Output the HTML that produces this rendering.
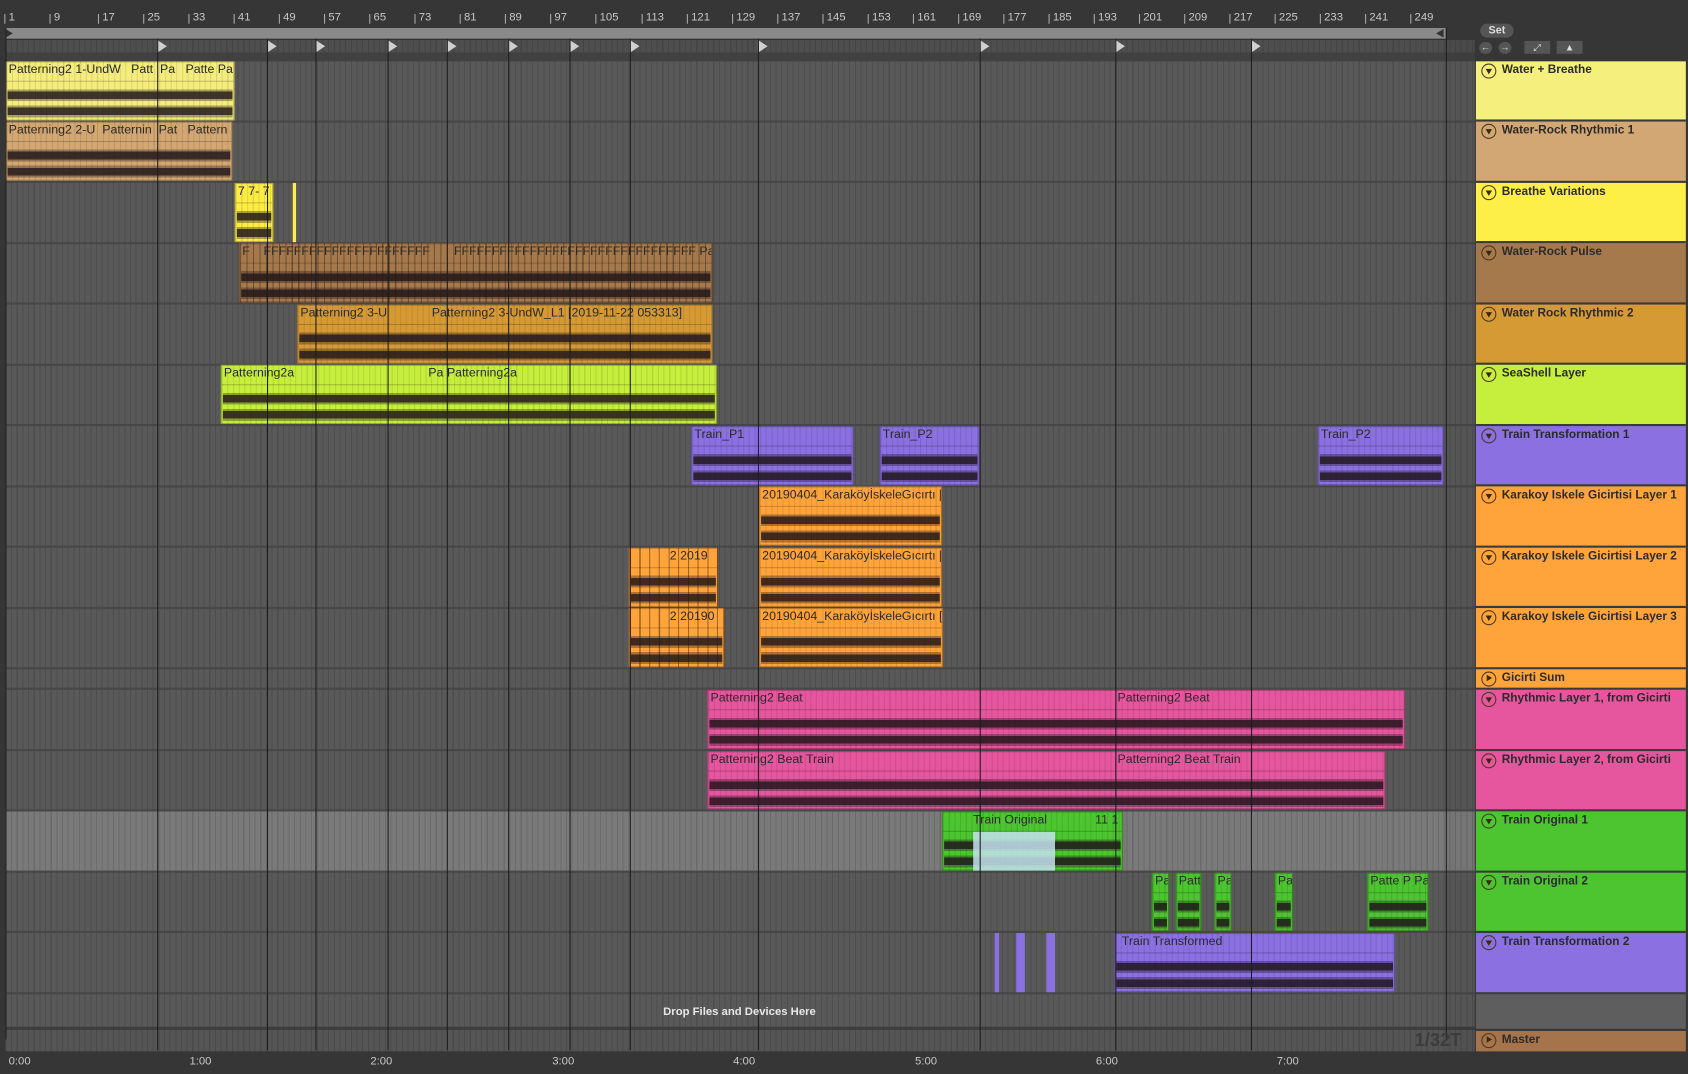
<!DOCTYPE html>
<html><head><meta charset="utf-8"><style>
*{margin:0;padding:0;box-sizing:border-box}
html,body{width:1688px;height:1074px;overflow:hidden;background:#353535}
#w{position:absolute;left:0;top:0;width:1568px;height:998px;transform-origin:0 0;transform:scale(1.07653,1.07615);font-family:"Liberation Sans",sans-serif;background:#363636}
.a{position:absolute}
.rl{position:absolute;top:10px;font-size:10.5px;color:#c8c8c8}
.rl:before{content:"";position:absolute;left:-4px;top:3px;width:1px;height:9px;background:#aaa}
.grid{position:absolute;left:5px;width:1365px;background-color:#595959;background-image:repeating-linear-gradient(90deg,rgba(0,0,0,.13) 0 1px,transparent 1px 5.26px)}
.sep{position:absolute;left:5px;width:1365px;height:2px;background:#474747}
.vl{position:absolute;top:36px;width:1px;height:940px;background:#1e1e1e}
.loc{position:absolute;top:37px;width:0;height:0;border-top:6px solid transparent;border-bottom:6px solid transparent;border-left:9px solid #cfcfcf}
.c{position:absolute;border:1px solid rgba(0,0,0,.25);overflow:hidden;background-image:repeating-linear-gradient(90deg,rgba(0,0,0,.1) 0 1px,transparent 1px 5.26px)}
.c span{position:absolute;left:2px;top:1px;font-size:11.5px;color:#2a2a2a;white-space:nowrap}
.c:before{content:"";position:absolute;left:0;right:0;top:17px;height:1px;background:rgba(0,0,0,.2)}
.c.w:after{content:"";position:absolute;left:1px;right:1px;top:22px;height:34px;background:linear-gradient(to bottom,transparent 0 3px,rgba(30,20,25,.35) 3px 5px,rgba(30,20,25,.85) 5px 12px,rgba(30,20,25,.35) 12px 14px,transparent 14px 18px,rgba(30,20,25,.35) 18px 20px,rgba(30,20,25,.85) 20px 27px,rgba(30,20,25,.35) 27px 29px,transparent 29px)}
.h{position:absolute;left:1371px;width:195px;border-bottom:2px solid #3a3a3a}
.h b{position:absolute;left:24px;top:2px;font-size:11px;color:#2b2b2b}
.h i{position:absolute;left:5px;top:2px;width:14px;height:14px;border:1.5px solid #4a3a20;border-radius:50%}
.h i:after{content:"";position:absolute;left:2.5px;top:3.5px;border-left:3.5px solid transparent;border-right:3.5px solid transparent;border-top:5px solid #3a2a10}
.h i.p:after{left:4px;top:2px;border-top:3.5px solid transparent;border-bottom:3.5px solid transparent;border-left:5px solid #3a2a10;border-right:0}
.tl{position:absolute;top:980px;font-size:10.5px;color:#c8c8c8}
</style></head><body><div id="w">
<div class="a" style="left:0;top:0;width:1370px;height:26px;background:#363636"></div>
<div class="rl" style="left:8px">1</div><div class="rl" style="left:50px">9</div><div class="rl" style="left:95px">17</div><div class="rl" style="left:137px">25</div><div class="rl" style="left:179px">33</div><div class="rl" style="left:221px">41</div><div class="rl" style="left:263px">49</div><div class="rl" style="left:305px">57</div><div class="rl" style="left:347px">65</div><div class="rl" style="left:389px">73</div><div class="rl" style="left:431px">81</div><div class="rl" style="left:473px">89</div><div class="rl" style="left:515px">97</div><div class="rl" style="left:557px">105</div><div class="rl" style="left:600px">113</div><div class="rl" style="left:642px">121</div><div class="rl" style="left:684px">129</div><div class="rl" style="left:726px">137</div><div class="rl" style="left:768px">145</div><div class="rl" style="left:810px">153</div><div class="rl" style="left:852px">161</div><div class="rl" style="left:894px">169</div><div class="rl" style="left:936px">177</div><div class="rl" style="left:978px">185</div><div class="rl" style="left:1020px">193</div><div class="rl" style="left:1062px">201</div><div class="rl" style="left:1104px">209</div><div class="rl" style="left:1146px">217</div><div class="rl" style="left:1188px">225</div><div class="rl" style="left:1230px">233</div><div class="rl" style="left:1272px">241</div><div class="rl" style="left:1314px">249</div>
<div class="a" style="left:5px;top:26px;width:1338px;height:11px;background:#8a8a8a;border-bottom:1px solid #222"></div>
<div class="a" style="left:5px;top:27px;border-top:4px solid transparent;border-bottom:4px solid transparent;border-left:7px solid #333"></div>
<div class="a" style="left:1334px;top:27px;border-top:4px solid transparent;border-bottom:4px solid transparent;border-right:7px solid #333"></div>
<div class="grid" style="top:37px;height:12px;background-color:#4e4e4e"></div>
<div class="a" style="left:5px;top:49px;width:1365px;height:8px;background:#414141"></div>
<div class="grid" style="top:57px;height:697px"></div>
<div class="grid" style="top:754px;height:56px;background-color:#7a7a7a"></div>
<div class="grid" style="top:810px;height:145px"></div>
<div class="grid" style="top:957px;height:20px;background-color:#555"></div>
<div class="sep" style="top:112px"></div><div class="sep" style="top:168px"></div><div class="sep" style="top:225px"></div><div class="sep" style="top:281px"></div><div class="sep" style="top:338px"></div><div class="sep" style="top:394px"></div><div class="sep" style="top:451px"></div><div class="sep" style="top:507px"></div><div class="sep" style="top:564px"></div><div class="sep" style="top:620px"></div><div class="sep" style="top:639px"></div><div class="sep" style="top:696px"></div><div class="sep" style="top:752px"></div><div class="sep" style="top:809px"></div><div class="sep" style="top:865px"></div><div class="sep" style="top:922px"></div><div class="a" style="left:5px;top:954px;width:1365px;height:3px;background:#3e3e3e"></div>
<div class="a" style="left:1343px;top:36px;width:27px;height:940px;background:rgba(0,0,0,.04)"></div>
<div class="loc" style="left:146px"></div><div class="loc" style="left:248px"></div><div class="loc" style="left:293px"></div><div class="loc" style="left:360px"></div><div class="loc" style="left:415px"></div><div class="loc" style="left:472px"></div><div class="loc" style="left:529px"></div><div class="loc" style="left:585px"></div><div class="loc" style="left:704px"></div><div class="loc" style="left:910px"></div><div class="loc" style="left:1036px"></div><div class="loc" style="left:1162px"></div>
<div class="c w" style="left:5px;top:57px;width:213px;height:55px;background-color:#f4ec7c"><span>Patterning2 1-UndW&nbsp;&nbsp; Patt&nbsp; Pa&nbsp;&nbsp; Patte Pa</span></div>
<div class="c w" style="left:5px;top:113px;width:211px;height:55px;background-color:#d3a771"><span>Patterning2 2-U&nbsp; Patternin&nbsp; Pat&nbsp;&nbsp; Pattern</span></div>
<div class="c w" style="left:218px;top:170px;width:36px;height:55px;background-color:#fcec44"><span>7 7- 7</span></div>
<div class="a" style="left:272px;top:170px;width:3px;height:55px;background:#fcec44"></div>
<div class="c w" style="left:222px;top:226px;width:440px;height:55px;background-color:#a6794c;background-image:repeating-linear-gradient(90deg,rgba(0,0,0,.35) 0 1px,transparent 1px 6px)"><span>F&nbsp;&nbsp;&nbsp;&nbsp;FFFFFFFFFFFFFFFFFFFFFF&nbsp;&nbsp;&nbsp;&nbsp;&nbsp;&nbsp;&nbsp;FFFFFFFFFFFFFFFFFFFFFFFFFFFFFFFF Pat</span></div>
<div class="c w" style="left:276px;top:283px;width:386px;height:55px;background-color:#d69a35"><span>Patterning2 3-U&nbsp;&nbsp;&nbsp;&nbsp;&nbsp;&nbsp;&nbsp;&nbsp;&nbsp;&nbsp;&nbsp;&nbsp; Patterning2 3-UndW_L1 [2019-11-22 053313]</span></div>
<div class="c w" style="left:205px;top:339px;width:461px;height:55px;background-color:#c6ee3c"><span>Patterning2a&nbsp;&nbsp;&nbsp;&nbsp;&nbsp;&nbsp;&nbsp;&nbsp;&nbsp;&nbsp;&nbsp;&nbsp;&nbsp;&nbsp;&nbsp;&nbsp;&nbsp;&nbsp;&nbsp;&nbsp;&nbsp;&nbsp;&nbsp;&nbsp;&nbsp;&nbsp;&nbsp;&nbsp;&nbsp;&nbsp;&nbsp;&nbsp;&nbsp;&nbsp;&nbsp;&nbsp;&nbsp;&nbsp; Pa Patterning2a</span></div>
<div class="c w" style="left:642px;top:396px;width:151px;height:55px;background-color:#8a70e0"><span>Train_P1</span></div>
<div class="c w" style="left:817px;top:396px;width:93px;height:55px;background-color:#8a70e0"><span>Train_P2</span></div>
<div class="c w" style="left:1224px;top:396px;width:117px;height:55px;background-color:#8a70e0"><span>Train_P2</span></div>
<div class="c w" style="left:705px;top:452px;width:170px;height:55px;background-color:#ffa43a"><span>20190404_KaraköyİskeleGıcırtı [</span></div>
<div class="c w" style="left:584px;top:509px;width:83px;height:55px;background-color:#ffa43a;background-image:repeating-linear-gradient(90deg,rgba(0,0,0,.4) 0 1px,transparent 1px 9px)"><span>&nbsp;&nbsp;&nbsp;&nbsp;&nbsp;&nbsp;&nbsp;&nbsp;&nbsp;&nbsp; 2 2019</span></div>
<div class="c w" style="left:705px;top:509px;width:170px;height:55px;background-color:#ffa43a"><span>20190404_KaraköyİskeleGıcırtı [</span></div>
<div class="c w" style="left:584px;top:565px;width:89px;height:55px;background-color:#ffa43a;background-image:repeating-linear-gradient(90deg,rgba(0,0,0,.4) 0 1px,transparent 1px 9px)"><span>&nbsp;&nbsp;&nbsp;&nbsp;&nbsp;&nbsp;&nbsp;&nbsp;&nbsp;&nbsp; 2 20190</span></div>
<div class="c w" style="left:705px;top:565px;width:171px;height:55px;background-color:#ffa43a"><span>20190404_KaraköyİskeleGıcırtı [</span></div>
<div class="c w" style="left:657px;top:641px;width:648px;height:55px;background-color:#e5569e"><span>Patterning2 Beat</span><span style="left:380px">Patterning2 Beat</span></div>
<div class="c w" style="left:657px;top:698px;width:630px;height:54px;background-color:#e5569e"><span>Patterning2 Beat Train</span><span style="left:380px">Patterning2 Beat Train</span></div>
<div class="c w" style="left:875px;top:754px;width:168px;height:55px;background-color:#4cc530"><span style="left:28px">Train Original&nbsp;&nbsp;&nbsp;&nbsp;&nbsp;&nbsp;&nbsp;&nbsp;&nbsp;&nbsp;&nbsp;&nbsp;&nbsp; 11 1 11 1</span></div>
<div class="a" style="left:904px;top:773px;width:76px;height:36px;background:#c4e2ee;opacity:.85"></div>
<div class="c w" style="left:1070px;top:811px;width:16px;height:54px;background-color:#4cc530"><span>Pa</span></div>
<div class="c w" style="left:1092px;top:811px;width:24px;height:54px;background-color:#4cc530"><span>Patt</span></div>
<div class="c w" style="left:1128px;top:811px;width:16px;height:54px;background-color:#4cc530"><span>Pa</span></div>
<div class="c w" style="left:1184px;top:811px;width:17px;height:54px;background-color:#4cc530"><span>Pat</span></div>
<div class="c w" style="left:1270px;top:811px;width:57px;height:54px;background-color:#4cc530"><span>Patte P Pa</span></div>
<div class="a" style="left:924px;top:867px;width:4px;height:55px;background:#8a70e0"></div>
<div class="a" style="left:944px;top:867px;width:8px;height:55px;background:#8a70e0"></div>
<div class="a" style="left:972px;top:867px;width:8px;height:55px;background:#8a70e0"></div>
<div class="c w" style="left:1035px;top:867px;width:261px;height:55px;background-color:#8a70e0"><span style="left:6px">Train Transformed</span></div>
<div class="vl" style="left:146px"></div><div class="vl" style="left:248px"></div><div class="vl" style="left:293px"></div><div class="vl" style="left:360px"></div><div class="vl" style="left:415px"></div><div class="vl" style="left:472px"></div><div class="vl" style="left:529px"></div><div class="vl" style="left:585px"></div><div class="vl" style="left:704px"></div><div class="vl" style="left:910px"></div><div class="vl" style="left:1036px"></div><div class="vl" style="left:1162px"></div><div class="vl" style="left:1343px;top:26px"></div><div class="vl" style="left:5px;top:26px"></div>
<div class="a" style="left:616px;top:934px;font-size:10.5px;color:#e8e8e8;font-weight:bold">Drop Files and Devices Here</div>
<div class="a" style="left:1314px;top:957px;font-size:17px;font-weight:bold;color:#3c3c3c">1/32T</div>
<div class="a" style="left:0;top:977px;width:1370px;height:21px;background:#363636"></div>
<div class="tl" style="left:8px">0:00</div><div class="tl" style="left:176px">1:00</div><div class="tl" style="left:344px">2:00</div><div class="tl" style="left:513px">3:00</div><div class="tl" style="left:681px">4:00</div><div class="tl" style="left:850px">5:00</div><div class="tl" style="left:1018px">6:00</div><div class="tl" style="left:1186px">7:00</div>
<div class="a" style="left:1370px;top:0;width:198px;height:998px;background:#363636"></div>
<div class="a" style="left:1375px;top:22px;width:31px;height:13px;border-radius:7px;background:#555;color:#ddd;font-size:10px;font-weight:bold;text-align:center;line-height:13px">Set</div>
<div class="a" style="left:1374px;top:39px;width:12px;height:11px;border-radius:6px;background:#555;color:#ddd;font-size:9px;text-align:center;line-height:11px">←</div>
<div class="a" style="left:1392px;top:39px;width:12px;height:11px;border-radius:6px;background:#555;color:#ddd;font-size:9px;text-align:center;line-height:11px">→</div>
<div class="a" style="left:1416px;top:38px;width:24px;height:12px;background:#555;color:#ddd;font-size:9px;text-align:center;line-height:12px">⤢</div>
<div class="a" style="left:1446px;top:38px;width:24px;height:12px;background:#555;color:#ddd;font-size:9px;text-align:center;line-height:12px">▲</div>
<div class="h" style="top:57px;height:56px;background:#f5ef7e"><i></i><b>Water + Breathe</b></div>
<div class="h" style="top:113px;height:57px;background:#d2a773"><i></i><b>Water-Rock Rhythmic 1</b></div>
<div class="h" style="top:170px;height:56px;background:#fdee48"><i></i><b>Breathe Variations</b></div>
<div class="h" style="top:226px;height:57px;background:#a6794d"><i></i><b>Water-Rock Pulse</b></div>
<div class="h" style="top:283px;height:56px;background:#d69a35"><i></i><b>Water Rock Rhythmic 2</b></div>
<div class="h" style="top:339px;height:57px;background:#c6ee3c"><i></i><b>SeaShell Layer</b></div>
<div class="h" style="top:396px;height:56px;background:#8a70e0"><i></i><b>Train Transformation 1</b></div>
<div class="h" style="top:452px;height:57px;background:#ffa43a"><i></i><b>Karakoy Iskele Gicirtisi Layer 1</b></div>
<div class="h" style="top:509px;height:56px;background:#ffa43a"><i></i><b>Karakoy Iskele Gicirtisi Layer 2</b></div>
<div class="h" style="top:565px;height:57px;background:#ffa43a"><i></i><b>Karakoy Iskele Gicirtisi Layer 3</b></div>
<div class="h" style="top:622px;height:19px;background:#ffa43a"><i class="p"></i><b>Gicirti Sum</b></div>
<div class="h" style="top:641px;height:57px;background:#e5569e"><i></i><b>Rhythmic Layer 1, from Gicirti</b></div>
<div class="h" style="top:698px;height:56px;background:#e5569e"><i></i><b>Rhythmic Layer 2, from Gicirti</b></div>
<div class="h" style="top:754px;height:57px;background:#4cc530"><i></i><b>Train Original 1</b></div>
<div class="h" style="top:811px;height:56px;background:#4cc530"><i></i><b>Train Original 2</b></div>
<div class="h" style="top:867px;height:57px;background:#8a70e0"><i></i><b>Train Transformation 2</b></div>
<div class="a" style="left:1371px;top:924px;width:195px;height:32px;background:#5e5e5e"></div>
<div class="h" style="top:958px;height:19px;background:#a5744a;border:0"><i class="p"></i><b>Master</b></div>
</div></body></html>
